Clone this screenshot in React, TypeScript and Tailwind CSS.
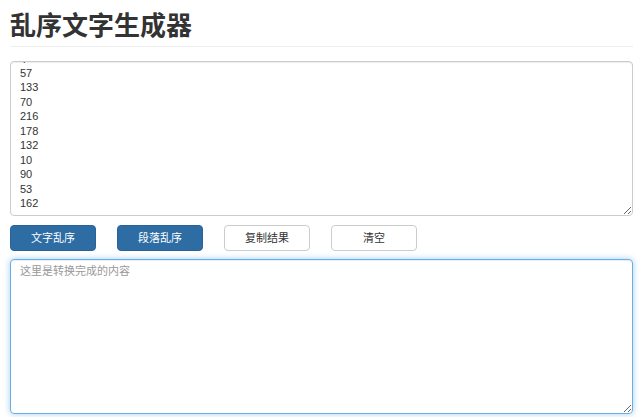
import { useLayoutEffect, useRef } from "react";

const source = [
  151, 24, 88, 201, 7, 143, 66, 119, 35, 190, 12, 77, 160, 241, 98, 4, 57, 133, 70, 216, 178,
  132, 10, 90, 53, 162,
].join("\n");

const font = { fontFamily: '"Liberation Sans", "Noto Sans CJK SC", sans-serif' };

function ActionButton({ label, primary }: { label: string; primary?: boolean }) {
  return (
    <button
      type="button"
      className={
        primary
          ? "w-[86px] h-[26px] rounded-[4px] border border-[#2a639a] bg-[#2e6da4] text-white text-[11px] leading-none"
          : "w-[86px] h-[26px] rounded-[4px] border border-[#cccccc] bg-white text-[#333333] text-[11px] leading-none"
      }
    >
      {label}
    </button>
  );
}

export default function App() {
  const inputRef = useRef<HTMLTextAreaElement>(null);

  // the input box is shown scrolled to its end
  useLayoutEffect(() => {
    const el = inputRef.current;
    if (el) el.scrollTop = el.scrollHeight;
  }, []);

  return (
    <div className="min-h-[417px] bg-white" style={font}>
      <div className="ml-[10px] w-[623px]">
        <h1 className="pt-[12px] pb-[6px] text-[26px] leading-[28px] font-bold text-[#333333] border-b border-[#eeeeee]">
          乱序文字生成器
        </h1>

        <textarea
          ref={inputRef}
          defaultValue={source}
          className="block mt-[14px] w-full h-[155px] rounded-[4px] border border-[#cccccc] px-[9px] py-[5px] text-[11px] leading-[14.44px] text-[#333333] overflow-hidden outline-none shadow-[inset_0_1px_1px_rgba(0,0,0,0.075)]"
        />

        <div className="flex gap-[21px] mt-[9px]">
          <ActionButton label="文字乱序" primary />
          <ActionButton label="段落乱序" primary />
          <ActionButton label="复制结果" />
          <ActionButton label="清空" />
        </div>

        <textarea
          placeholder="这里是转换完成的内容"
          className="block mt-[8px] w-full h-[155px] rounded-[4px] border border-[#66afe9] px-[9px] py-[4px] text-[11px] leading-[14.44px] text-[#333333] placeholder:text-[#999999] outline-none shadow-[inset_0_1px_1px_rgba(0,0,0,0.075),0_0_6px_rgba(102,175,233,0.6)]"
        />
      </div>
    </div>
  );
}
